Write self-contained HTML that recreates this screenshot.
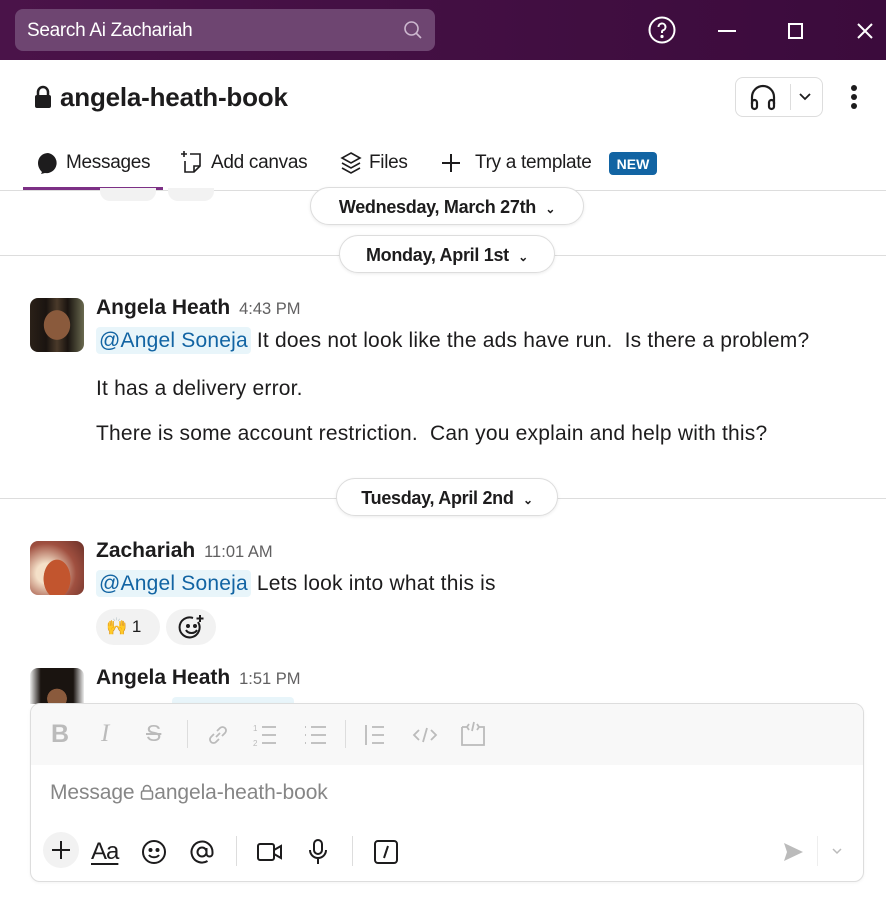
<!DOCTYPE html>
<html><head><meta charset="utf-8"><style>
*{margin:0;padding:0;box-sizing:border-box}
body{width:886px;height:910px;overflow:hidden;background:#fff;font-family:"Liberation Sans",sans-serif;color:#1d1c1d;position:relative}
.a{position:absolute;white-space:nowrap}
.top{position:absolute;left:0;top:0;width:886px;height:60px;background:linear-gradient(90deg,#4a1349,#3b0b3c)}
.search{position:absolute;left:15px;top:9px;width:420px;height:42px;border-radius:8px;background:#6e4571;color:#fff;font-size:19px;padding:11px 12px;letter-spacing:-0.3px}
.pill{position:absolute;height:38px;border:1px solid #ddd;border-radius:19px;background:#fff;font-size:18px;font-weight:bold;padding:9px 0;text-align:center;letter-spacing:-0.3px;box-shadow:0 1px 3px rgba(0,0,0,.08)}
.hr{position:absolute;left:0;width:886px;height:1px;background:#ddd}
.av{position:absolute;width:54px;height:54px;border-radius:8px;overflow:hidden}
.name{font-size:21px;font-weight:bold;letter-spacing:0}
.time{font-size:16.5px;color:#616061;font-weight:normal}
.msg{font-size:21px;letter-spacing:0.2px}
.men{background:#e8f5fa;color:#1264a3;border-radius:4px;padding:2px 3px}
.tb{position:absolute;font-size:19px;letter-spacing:-0.3px;color:#1d1c1d}
</style></head><body>
<div class="top"></div>
<div class="search">Search Ai Zachariah
<svg style="position:absolute;right:12px;top:11px" width="20" height="20" viewBox="0 0 20 20" fill="none" stroke="#cdb8cf" stroke-width="1.6"><circle cx="8.5" cy="8.5" r="6.5"/><path d="M13 13l5 5"/></svg></div>
<svg class="a" style="left:648px;top:16px" width="28" height="28" viewBox="0 0 28 28" fill="none" stroke="#fff" stroke-width="2"><circle cx="14" cy="14" r="12.5"/><path d="M10.5 11a3.5 3.5 0 1 1 4.5 3.3c-.8.3-1 1-1 1.7v1"/><circle cx="14" cy="20.5" r=".6" fill="#fff"/></svg>
<div class="a" style="left:718px;top:30px;width:18px;height:2px;background:#fff"></div>
<div class="a" style="left:788px;top:23px;width:15px;height:16px;border:2px solid #fff"></div>
<svg class="a" style="left:856px;top:22px" width="18" height="18" viewBox="0 0 18 18" stroke="#fff" stroke-width="2"><path d="M2 2l14 14M16 2L2 16"/></svg>

<svg class="a" style="left:34px;top:85px" width="18" height="24" viewBox="0 0 18 24"><path d="M4 10V7a5 5 0 0 1 10 0v3" fill="none" stroke="#1d1c1d" stroke-width="2.5"/><rect x="1" y="10" width="16" height="13" rx="2" fill="#1d1c1d"/></svg>
<div class="a" style="left:60px;top:82px;font-size:26px;font-weight:bold;letter-spacing:-0.2px">angela-heath-book</div>
<div class="a" style="left:735px;top:77px;width:88px;height:40px;border:1px solid #ddd;border-radius:8px"></div>
<svg class="a" style="left:748px;top:84px" width="30" height="28" viewBox="0 0 30 28" fill="none" stroke="#1d1c1d" stroke-width="2.2"><path d="M4 20v-7a11 11 0 0 1 22 0v7"/><rect x="4" y="16" width="5" height="9" rx="2.5"/><rect x="21" y="16" width="5" height="9" rx="2.5"/></svg>
<div class="a" style="left:790px;top:84px;width:1px;height:26px;background:#ddd"></div>
<svg class="a" style="left:798px;top:92px" width="14" height="10" viewBox="0 0 14 10" fill="none" stroke="#1d1c1d" stroke-width="1.8"><path d="M2 2l5 5 5-5"/></svg>
<div class="a" style="left:851px;top:85px;width:6px;height:6px;border-radius:3px;background:#1d1c1d"></div>
<div class="a" style="left:851px;top:94px;width:6px;height:6px;border-radius:3px;background:#1d1c1d"></div>
<div class="a" style="left:851px;top:103px;width:6px;height:6px;border-radius:3px;background:#1d1c1d"></div>

<svg class="a" style="left:37px;top:152px" width="22" height="22" viewBox="0 0 22 22"><path d="M11 1a10 10 0 0 0-10 10c0 4 2 7 4 9l-1 2 4-1a10 10 0 1 0 3-20z" fill="#1d1c1d"/></svg>
<div class="tb" style="left:66px;top:152px">Messages</div>
<svg class="a" style="left:180px;top:150px" width="24" height="26" viewBox="0 0 24 26" fill="none" stroke="#1d1c1d" stroke-width="1.6"><path d="M4 1v6M1 4h6"/><path d="M10 4h10v12l-6 6H5V11"/><path d="M14 22v-6h6"/></svg>
<div class="tb" style="left:211px;top:152px">Add canvas</div>
<svg class="a" style="left:340px;top:151px" width="22" height="24" viewBox="0 0 22 24" fill="none" stroke="#1d1c1d" stroke-width="1.6"><path d="M11 2l9 5-9 5-9-5z"/><path d="M2 12l9 5 9-5"/><path d="M2 17l9 5 9-5"/></svg>
<div class="tb" style="left:369px;top:152px">Files</div>
<svg class="a" style="left:440px;top:152px" width="22" height="22" viewBox="0 0 22 22" stroke="#1d1c1d" stroke-width="2"><path d="M11 2v18M2 11h18"/></svg>
<div class="tb" style="left:475px;top:152px">Try a template</div>
<div class="a" style="left:609px;top:152px;width:48px;height:23px;background:#1264a3;border-radius:4px;color:#fff;font-size:14px;font-weight:bold;text-align:center;padding-top:4px">NEW</div>
<div class="a" style="left:23px;top:187px;width:140px;height:3px;background:#7c3085"></div>
<div class="hr" style="top:190px"></div>

<div class="a" style="left:100px;top:188px;width:56px;height:13px;border-radius:0 0 10px 10px;background:#f2f2f2"></div>
<div class="a" style="left:168px;top:188px;width:46px;height:13px;border-radius:0 0 10px 10px;background:#f2f2f2"></div>

<div class="pill" style="left:310px;top:187px;width:274px">Wednesday, March 27th&nbsp; <span style="font-size:12px">⌄</span></div>
<div class="hr" style="top:255px"></div>
<div class="pill" style="left:339px;top:235px;width:216px">Monday, April 1st&nbsp; <span style="font-size:12px">⌄</span></div>

<div class="av" style="left:30px;top:298px;background:radial-gradient(ellipse 40% 45% at 50% 50%,#8a5a3c 0 60%,transparent 62%),linear-gradient(90deg,#2a2018 0,#1a1410 30%,#4a3a2a 50%,#1a1410 70%,#6a6a50 100%)"></div>
<div class="a" style="left:96px;top:296px"><span class="name">Angela Heath</span>&nbsp; <span class="time">4:43 PM</span></div>
<div class="a msg" style="left:96px;top:329px"><span class="men">@Angel Soneja</span> It does not look like the ads have run.&nbsp; Is there a problem?</div>
<div class="a msg" style="left:96px;top:377px">It has a delivery error.</div>
<div class="a msg" style="left:96px;top:422px">There is some account restriction.&nbsp; Can you explain and help with this?</div>

<div class="hr" style="top:498px"></div>
<div class="pill" style="left:336px;top:478px;width:222px">Tuesday, April 2nd&nbsp; <span style="font-size:12px">⌄</span></div>

<div class="av" style="left:30px;top:541px;background:radial-gradient(ellipse 35% 50% at 50% 70%,#c2552e 0 70%,transparent 72%),radial-gradient(circle at 30% 60%,#f4e0c8 0 20%,#a05040 60%,#6a3028)"></div>
<div class="a" style="left:96px;top:539px"><span class="name">Zachariah</span>&nbsp; <span class="time">11:01 AM</span></div>
<div class="a msg" style="left:96px;top:572px"><span class="men">@Angel Soneja</span> Lets look into what this is</div>
<div class="a" style="left:96px;top:609px;width:64px;height:36px;border-radius:18px;background:#f2f2f2;font-size:17px;padding:8px 0 0 10px">🙌 1</div>
<div class="a" style="left:166px;top:609px;width:50px;height:36px;border-radius:18px;background:#f2f2f2"></div>
<svg class="a" style="left:178px;top:613px" width="28" height="28" viewBox="0 0 28 28" fill="none" stroke="#1d1c1d" stroke-width="2"><path d="M20 9a10 10 0 1 1-5-4"/><circle cx="10" cy="13" r="1" fill="#1d1c1d"/><circle cx="17" cy="13" r="1" fill="#1d1c1d"/><path d="M8 17c2 4 9 4 11 0"/><path d="M22 2v7M18.5 5.5h7"/></svg>

<div class="av" style="left:30px;top:668px;height:36px;border-radius:8px 8px 0 0;background:radial-gradient(ellipse 30% 45% at 50% 85%,#8a5a3c 0 60%,transparent 62%),linear-gradient(90deg,#eee 0,#1a1410 20%,#1a1410 80%,#eee 100%)"></div>
<div class="a" style="left:96px;top:666px"><span class="name">Angela Heath</span>&nbsp; <span class="time">1:51 PM</span></div>
<div class="a" style="left:172px;top:697px;width:122px;height:8px;border-radius:4px 4px 0 0;background:#e8f5fa"></div>

<div class="a" style="left:30px;top:703px;width:834px;height:179px;border:1px solid #ddd;border-radius:10px;background:#fff;overflow:hidden;box-shadow:0 1px 3px rgba(0,0,0,.05)">
 <div style="height:61px;background:#f8f8f8"></div>
</div>
<div class="a" style="left:51px;top:720px;font-size:25px;font-weight:bold;color:#bbb">B</div>
<div class="a" style="left:101px;top:720px;font-size:25px;font-style:italic;font-family:'Liberation Serif',serif;color:#bbb">I</div>
<div class="a" style="left:146px;top:720px;font-size:23px;color:#bbb;text-decoration:line-through">S</div>
<div class="a" style="left:187px;top:720px;width:1px;height:28px;background:#ddd"></div>
<svg class="a" style="left:205px;top:722px" width="26" height="26" viewBox="0 0 26 26" fill="none" stroke="#bbb" stroke-width="1.8"><path d="M11 15l4-4M9 12l-3 3a3.5 3.5 0 0 0 5 5l3-3M17 14l3-3a3.5 3.5 0 0 0-5-5l-3 3"/></svg>
<svg class="a" style="left:252px;top:722px" width="26" height="26" viewBox="0 0 26 26" fill="none" stroke="#bbb" stroke-width="1.8"><path d="M10 5h14M10 13h14M10 21h14"/><text x="1" y="9" font-size="8" fill="#bbb" stroke="none">1</text><text x="1" y="24" font-size="8" fill="#bbb" stroke="none">2</text></svg>
<svg class="a" style="left:302px;top:722px" width="26" height="26" viewBox="0 0 26 26" fill="none" stroke="#bbb" stroke-width="1.8"><path d="M9 5h15M9 13h15M9 21h15M3 5h1M3 13h1M3 21h1"/></svg>
<div class="a" style="left:345px;top:720px;width:1px;height:28px;background:#ddd"></div>
<svg class="a" style="left:362px;top:722px" width="26" height="26" viewBox="0 0 26 26" fill="none" stroke="#bbb" stroke-width="1.8"><path d="M4 3v20M10 5h12M10 13h12M10 21h12"/></svg>
<svg class="a" style="left:411px;top:722px" width="28" height="26" viewBox="0 0 28 26" fill="none" stroke="#bbb" stroke-width="1.8"><path d="M8 8l-5 5 5 5M20 8l5 5-5 5M16 6l-4 14"/></svg>
<svg class="a" style="left:459px;top:721px" width="28" height="28" viewBox="0 0 28 28" fill="none" stroke="#bbb" stroke-width="1.8"><path d="M3 6v18h22V6h-5M8 6H3"/><path d="M10 3l-2 3 2 3M18 3l2 3-2 3M15 1l-2 9"/></svg>
<div class="a" style="left:50px;top:781px;font-size:21px;color:#868686;letter-spacing:-0.1px">Message <svg width="14" height="16" viewBox="0 0 14 16" style="vertical-align:-1px" fill="none" stroke="#868686" stroke-width="1.5"><path d="M3.5 7V5a3.5 3.5 0 0 1 7 0v2"/><rect x="1.5" y="7" width="11" height="8" rx="1.5"/></svg>angela-heath-book</div>
<div class="a" style="left:43px;top:832px;width:36px;height:36px;border-radius:18px;background:#f2f2f2"></div>
<svg class="a" style="left:50px;top:839px" width="22" height="22" viewBox="0 0 22 22" stroke="#1d1c1d" stroke-width="2"><path d="M11 2v18M2 11h18"/></svg>
<div class="a" style="left:91px;top:838px;font-size:24px;letter-spacing:-1px;text-decoration:underline;text-underline-offset:4px">Aa</div>
<svg class="a" style="left:141px;top:839px" width="26" height="26" viewBox="0 0 26 26" fill="none" stroke="#1d1c1d" stroke-width="2"><circle cx="13" cy="13" r="11"/><circle cx="9.5" cy="11" r="1" fill="#1d1c1d"/><circle cx="16.5" cy="11" r="1" fill="#1d1c1d"/><path d="M8 16c2 3 8 3 10 0"/></svg>
<svg class="a" style="left:189px;top:839px" width="26" height="26" viewBox="0 0 26 26" fill="none" stroke="#1d1c1d" stroke-width="2"><circle cx="13" cy="13" r="4.5"/><path d="M17.5 9v5.5a3 3 0 0 0 6 0V13a10.5 10.5 0 1 0-5 9"/></svg>
<div class="a" style="left:236px;top:836px;width:1px;height:30px;background:#ddd"></div>
<svg class="a" style="left:256px;top:840px" width="28" height="24" viewBox="0 0 28 24" fill="none" stroke="#1d1c1d" stroke-width="2"><rect x="2" y="4" width="16" height="16" rx="2"/><path d="M18 10l7-4v12l-7-4"/></svg>
<svg class="a" style="left:306px;top:838px" width="24" height="28" viewBox="0 0 24 28" fill="none" stroke="#1d1c1d" stroke-width="2"><rect x="8" y="2" width="8" height="14" rx="4"/><path d="M4 12a8 8 0 0 0 16 0M12 20v6"/></svg>
<div class="a" style="left:352px;top:836px;width:1px;height:30px;background:#ddd"></div>
<svg class="a" style="left:373px;top:839px" width="26" height="26" viewBox="0 0 26 26" fill="none" stroke="#1d1c1d" stroke-width="2"><rect x="2" y="2" width="22" height="22" rx="3"/><path d="M15 7l-4 12"/></svg>
<svg class="a" style="left:781px;top:840px" width="24" height="24" viewBox="0 0 24 24"><path d="M3 3l19 9-19 9 3-9z" fill="#bbb"/></svg>
<div class="a" style="left:817px;top:836px;width:1px;height:30px;background:#eee"></div>
<svg class="a" style="left:831px;top:847px" width="12" height="8" viewBox="0 0 12 8" fill="none" stroke="#bbb" stroke-width="1.5"><path d="M2 2l4 4 4-4"/></svg>
</body></html>
